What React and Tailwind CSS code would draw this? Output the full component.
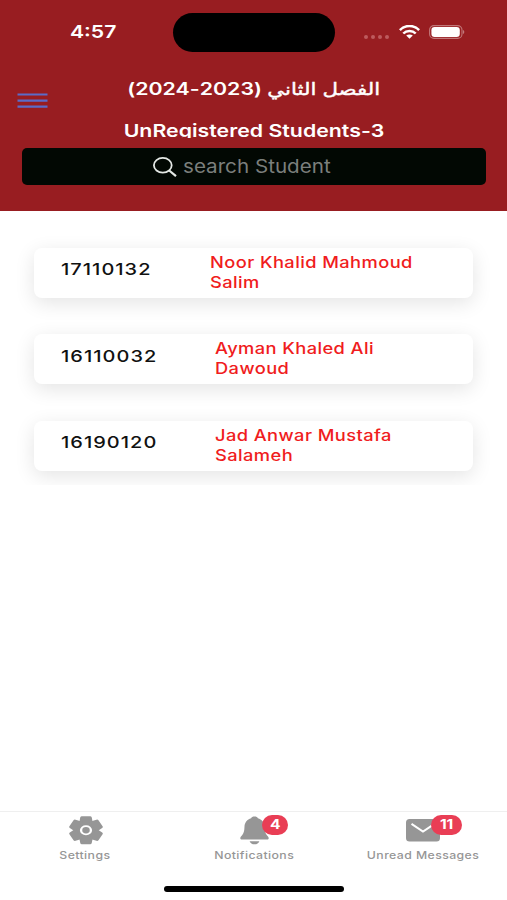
import { clsx } from 'clsx';

const STUDENTS = [
  { id: '17110132', name: ['Noor Khalid Mahmoud', 'Salim'], idWidth: 'w-[176px]' },
  { id: '16110032', name: ['Ayman Khaled Ali', 'Dawoud'], idWidth: 'w-[181px]' },
  { id: '16190120', name: ['Jad Anwar Mustafa', 'Salameh'], idWidth: 'w-[181px]' },
];

// wide text: the glyphs are stretched horizontally
function Wide({ className, children }) {
  return <span className={clsx('inline-block whitespace-nowrap', className)}>{children}</span>;
}

function WifiIcon() {
  return (
    <svg className="w-[21px] h-[14px]" viewBox="0 0 21 14" preserveAspectRatio="none">
      <g fill="none" stroke="#fff" strokeWidth="2.5">
        <path d="M0.9 5.1C6 -0.4 15 -0.4 20.1 5.1" />
        <path d="M4.3 8.5C7.6 5 13.4 5 16.7 8.5" />
      </g>
      <path d="M7.2 10.6C9 9 12 9 13.8 10.6L10.5 13.7Z" fill="#fff" />
    </svg>
  );
}

function BatteryIcon() {
  return (
    <svg className="w-[36px] h-[14px]" viewBox="0 0 36 14">
      <rect x="0.6" y="0.6" width="32.4" height="12.8" rx="4.4" fill="none" stroke="#fff" strokeOpacity="0.4" strokeWidth="1.1" />
      <rect x="2.4" y="2" width="28.4" height="10" rx="3.2" fill="#fff" />
      <path d="M34.2 5v4c1.4-.5 1.4-3.500 0-4z" fill="#fff" fillOpacity="0.5" />
    </svg>
  );
}

function GearIcon() {
  return (
    <svg className="w-[34px] h-[28.500px]" viewBox="0 0 29 29" preserveAspectRatio="none">
      <g fill="#969696">
        <circle cx="14.5" cy="14.5" r="10.4" />
        {[0, 60, 120, 180, 240, 300].map((a) => (
          <path key={a} transform={`rotate(${a} 14.5 14.5)`} d="M8.6 7.5L9.6 1.4Q9.9 0.2 11 0.2H18Q19.1 0.2 19.4 1.4L20.4 7.5Z" />
        ))}
      </g>
      <circle cx="14.5" cy="14.5" r="4.2" fill="none" stroke="#fff" strokeWidth="2" />
    </svg>
  );
}

function BellIcon() {
  return (
    <svg className="w-[29px] h-[29px]" viewBox="0 0 29 29">
      <path
        d="M14.5 0.6c-1.8 0-3 .7-3.4 1.7C7.2 3.5 4.7 6.4 4.5 10.6C4.3 15 4 17 2.3 19C1 20.5 0.3 21.2 0.3 22.2C0.3 23.1 0.9 23.6 1.8 23.6H27.2C28.1 23.6 28.7 23.1 28.7 22.2C28.7 21.2 28 20.5 26.7 19C25 17 24.7 15 24.5 10.6C24.3 6.4 21.8 3.5 17.9 2.3C17.5 1.3 16.3.6 14.5.6Z"
        fill="#969696"
      />
      <path d="M9.6 25.200H19.4C18.7 27.3 16.9 28.3 14.5 28.3S10.3 27.3 9.6 25.2Z" fill="#969696" />
    </svg>
  );
}

function MailIcon() {
  return (
    <svg className="w-[34px] h-[23px]" viewBox="0 0 34 23">
      <rect width="34" height="22.6" rx="3.5" fill="#969696" />
      <path d="M5.5 4.8L17 12.5L28.5 4.8" fill="none" stroke="#fff" strokeWidth="2" />
    </svg>
  );
}

function Badge({ className, children }) {
  return (
    <span
      className={clsx(
        'absolute top-[-1px] h-[20px] rounded-full bg-[#e93e55] flex items-center justify-center text-white text-[13px] font-bold',
        className
      )}
    >
      <span className="inline-block scale-x-[1.2]">{children}</span>
    </span>
  );
}

function Tab({ icon, label, badge, badgeClass, iconClass }) {
  return (
    <div className="flex-1 flex flex-col items-center">
      <div className={clsx('relative h-[29px] flex items-center justify-center', iconClass)}>
        {icon}
        {badge && <Badge className={badgeClass}>{badge}</Badge>}
      </div>
      <Wide className="mt-[4px] ml-px text-[10.500px] leading-[14px] tracking-[0.350px] text-[#969696] font-medium scale-x-[1.170]">
        {label}
      </Wide>
    </div>
  );
}

export default function App() {
  return (
    <div className="w-[507px] h-[900px] flex flex-col bg-white overflow-hidden font-['Inter','DejaVu_Sans',sans-serif]">
      <header className="h-[210.500px] shrink-0 bg-[#981d21] flex flex-col">
        <div className="h-[64px] flex items-center">
          <div className="w-[173px] pl-[69.500px]">
            <Wide className="origin-left scale-x-[1.210] text-[17.500px] leading-none font-semibold text-white">4:57</Wide>
          </div>
          <div className="w-[162px] h-[39px] rounded-full bg-black" />
          <div className="flex items-center pl-[29px]">
            <div className="flex gap-[3px] mt-[9px]">
              {[0, 1, 2, 3].map((i) => (
                <span key={i} className="w-[4px] h-[4px] rounded-full bg-[#bd5a5d]" />
              ))}
            </div>
            <div className="ml-[10px] flex">
              <WifiIcon />
            </div>
            <div className="ml-[9px] flex">
              <BatteryIcon />
            </div>
          </div>
        </div>

        <div className="h-[84px] flex">
          <button className="w-[48px] pl-[17px] pt-[29px] flex flex-col">
            <svg className="w-[31px] h-[16px]" viewBox="0 0 31 16" stroke="#5b6cc9" strokeWidth="2.2">
              <path d="M0.500 1.500H30.500M0.500 7.600H30.500M0.500 13.700H30.500" />
            </svg>
          </button>
          <div className="w-[412px] flex flex-col items-center text-white font-semibold">
            <h1 dir="rtl" className="mt-[12px] h-[26px] leading-[26px] text-[17px]">
              <Wide className="scale-x-[1.255]">
                <span className="font-normal [-webkit-text-stroke:0.4px_white]">الفصل الثاني</span> (2023-2024)
              </Wide>
            </h1>
            <h2 className="mt-[17px] h-[19px] overflow-y-clip leading-[24px] text-[17.500px]">
              <Wide className="scale-x-[1.218]">UnRegistered Students-3</Wide>
            </h2>
          </div>
        </div>

        <div className="mx-[21.500px] h-[37px] rounded-[5px] bg-[#020803] flex items-center pl-[131.500px]">
          <svg className="w-[24px] h-[20px]" viewBox="0 0 24 20" fill="none" stroke="#e4e8e5" strokeWidth="1.8">
            <ellipse cx="9.8" cy="8.3" rx="8.9" ry="7.4" />
            <path d="M16.2 13.5L23 19.2" strokeWidth="2.2" />
          </svg>
          <Wide className="ml-[6px] mt-px origin-left scale-x-[1.115] text-[18.500px] text-[#7b7f7c]">search Student</Wide>
        </div>
      </header>

      <main className="flex-1 min-h-0">
        <div className="h-[274px] overflow-hidden pt-[37px] px-[34px] flex flex-col gap-[36.500px]">
          {STUDENTS.map((s) => (
            <div key={s.id} className="h-[50px] shrink-0 rounded-[8px] bg-white shadow-[0_5px_20px_rgba(0,0,0,0.11)] flex">
              <div className={clsx('shrink-0 pl-[26.500px] pt-[9.500px]', s.idWidth)}>
                <Wide className="origin-left scale-x-[1.210] tracking-[0.850px] text-[16.500px] leading-[22px] font-medium text-[#111]">
                  {s.id}
                </Wide>
              </div>
              <div className="pt-[5px] text-[15.500px] leading-[20px] tracking-[0.350px] font-medium text-[#f01c20]">
                {s.name.map((line) => (
                  <div key={line}>
                    <Wide className="origin-left scale-x-[1.180]">{line}</Wide>
                  </div>
                ))}
              </div>
            </div>
          ))}
        </div>
      </main>

      <nav className="h-[89px] shrink-0 border-t border-[#efefef] flex flex-col">
        <div className="flex pt-[4px] h-[74px]">
          <Tab icon={<GearIcon />} label="Settings" iconClass="ml-[2px]" />
          <Tab icon={<BellIcon />} label="Notifications" badge={4} badgeClass="left-[22px] w-[26px]" iconClass="ml-[2px]" />
          <Tab icon={<MailIcon />} label="Unread Messages" badge={11} badgeClass="left-[25px] w-[31px]" iconClass="ml-px" />
        </div>
        <div className="ml-[164px] w-[180px] h-[5.500px] rounded-full bg-black" />
      </nav>
    </div>
  );
}
